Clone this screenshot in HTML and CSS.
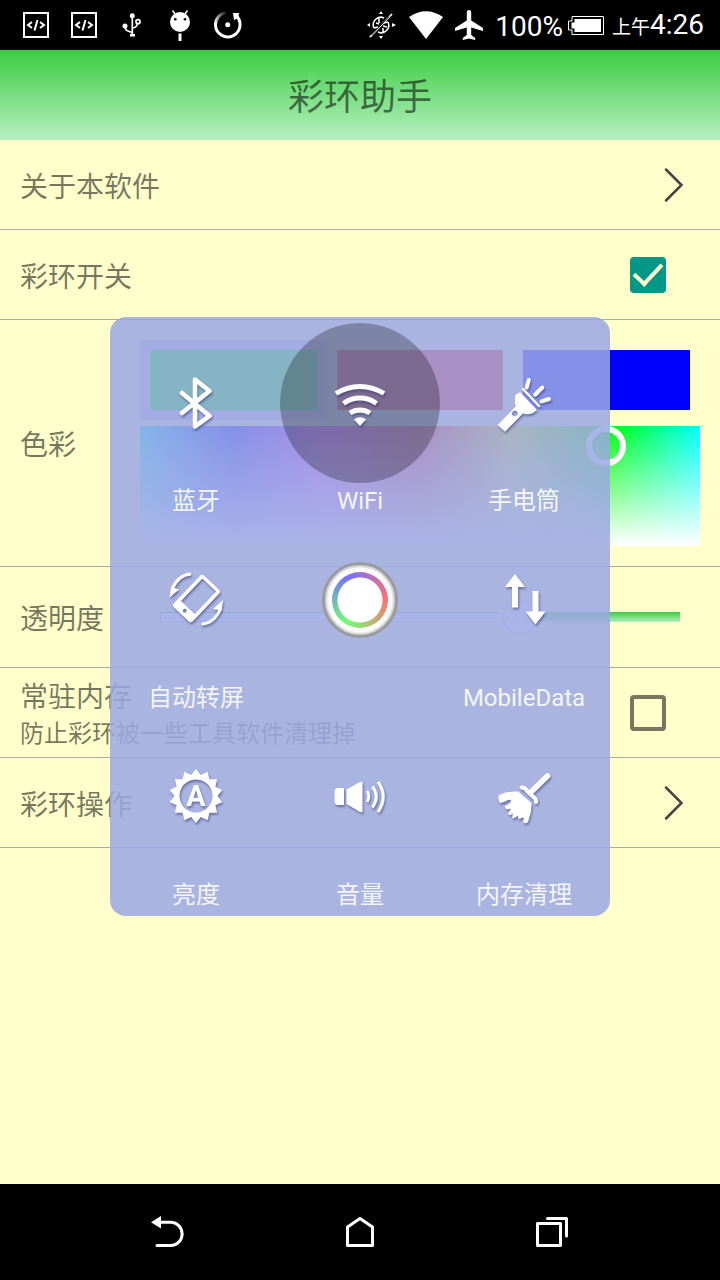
FILE: index.html
```html
<!DOCTYPE html>
<html lang="zh-CN">
<head>
<meta charset="utf-8">
<meta name="viewport" content="width=device-width, initial-scale=1">
<title>彩环助手</title>
<link rel="stylesheet" href="styles.css">
</head>
<body>
<div class="screen">
  <div class="status">
    <div class="status-left">
      <svg class="notice" viewBox="0 0 32 32"><rect x="4" y="4" width="24" height="24" fill="none" stroke="#fff" stroke-width="2"/><path d="M12 13l-4 3 4 3M20 13l4 3-4 3M17.500 11l-3 10.500" fill="none" stroke="#fff" stroke-width="2"/></svg>
      <svg class="notice" viewBox="0 0 32 32"><rect x="4" y="4" width="24" height="24" fill="none" stroke="#fff" stroke-width="2"/><path d="M12 13l-4 3 4 3M20 13l4 3-4 3M17.500 11l-3 10.500" fill="none" stroke="#fff" stroke-width="2"/></svg>
      <svg class="notice" viewBox="0 0 32 32"><g fill="none" stroke="#fff" stroke-width="1.700"><path d="M16.300 6v20M9 17q0 4 3 5l4 1.500M16.300 19q4.500-.5 5-4"/><circle cx="22" cy="12.700" r="2"/></g><g fill="#fff"><circle cx="16.300" cy="6.800" r="2.500"/><circle cx="9" cy="17" r="2.500"/><path d="M14 25h5v2.500h-5z"/></g></svg>
      <svg class="notice" viewBox="0 0 32 32"><circle cx="16" cy="13" r="10" fill="#fff"/><path d="M11 5L8.500 1.500M21 5l2.500-3.500" stroke="#fff" stroke-width="1.500"/><circle cx="11.300" cy="10.300" r="1.300"/><circle cx="21" cy="10.300" r="1.300"/><path d="M16 24.500v7.500" stroke="#fff" stroke-width="3"/></svg>
      <svg class="notice" viewBox="0 0 32 32"><defs><linearGradient id="fade" x1="0" y1="1" x2="1" y2="0"><stop offset="0" stop-color="#fff"/><stop offset="1" stop-color="#222"/></linearGradient></defs><path d="M23.500 6A12.300 12.300 0 1 1 3.500 16" fill="none" stroke="#fff" stroke-width="3"/><path d="M3.500 16A12.300 12.300 0 0 1 13.500 3.600" fill="none" stroke="url(#fade)" stroke-width="3"/><path d="M21 4h6.500l-1 1.500 1 5.500-2-1.500-3.500 1.500z" fill="#fff"/><circle cx="15.700" cy="15.700" r="2.500" fill="#fff"/></svg>
    </div>
    <div class="status-right">
      <svg class="mute" viewBox="0 0 32 32"><g fill="none" stroke="#fff" stroke-width="1.500"><path d="M5 28L27 5" stroke-width="1.800"/><path d="M6.500 26L24 7.500" stroke="#000" stroke-width="1"/><path d="M9 19a7.500 7.500 0 0 1 10-10M23 13a7.500 7.500 0 0 1-10 10M14 9v5M18 19v4M11 14l3 1M18 17l4 1M9 19l4-1M23 13l-4 1"/></g><path d="M14 5h4l-2-3zM14 27h4l-2 3zM5 14v4l-3-2zM27 14v4l4-2z" fill="#fff"/></svg>
      <svg class="signal" viewBox="0 0 34 28"><path d="M0 6Q17-5.500 34 6L17 28z" fill="#fff"/></svg>
      <svg class="plane" viewBox="0 0 28 30"><path d="M14 0q2.200 0 2.200 3v7.500L28 18v3l-11.800-3.500V25l4 3v2L14 28.500 7.800 30v-2l4-3v-7.500L0 21v-3l11.800-7.500V3q0-3 2.200-3z" fill="#fff"/></svg>
      <div class="power">
        <span class="percent">100%</span>
        <svg class="battery" viewBox="0 0 36 19"><path d="M4 .5h31.500v18H4v-4.500H.500V5H4z" fill="none" stroke="#fff"/><path d="M6.500 3H33v13H6.500v-3.500H3.500v-6h3z" fill="#fff"/></svg>
      </div>
      <time class="clock"><small>上午</small><span>4:26</span></time>
    </div>
  </div>

  <header class="title"><h1>彩环助手</h1></header>

  <main class="content">
    <a class="row" href="#about"><span class="name">关于本软件</span>
      <svg class="chevron" viewBox="0 0 20 36"><path d="M2 2.500L17.500 18 2 33.500" fill="none" stroke="#444" stroke-width="2.500" stroke-linecap="round"/></svg></a>
    <label class="row"><span class="name">彩环开关</span><input class="check" type="checkbox" checked></label>
    <section class="row row-color">
      <span class="name side">色彩</span>
      <div class="picker">
        <div class="swatches">
          <button class="swatch chosen" aria-label="绿"><span class="chip green"></span></button>
          <button class="swatch" aria-label="红"><span class="chip red"></span></button>
          <button class="swatch" aria-label="蓝"><span class="chip blue"></span></button>
        </div>
        <div class="spectrum"><span class="cursor"></span></div>
      </div>
    </section>
    <div class="row row-slider">
      <label class="name side" for="alpha">透明度</label>
      <div class="slide"><input id="alpha" class="range" type="range" min="0" max="255" value="180"></div>
    </div>
    <label class="row"><span class="stack"><span class="name">常驻内存</span><span class="hint">防止彩环被一些工具软件清理掉</span></span><input class="check" type="checkbox"></label>
    <a class="row" href="#usage"><span class="name">彩环操作</span>
      <svg class="chevron" viewBox="0 0 20 36"><path d="M2 2.500L17.500 18 2 33.500" fill="none" stroke="#444" stroke-width="2.500" stroke-linecap="round"/></svg></a>

    <div class="overlay">
      <div class="panel">
        <button class="tile"><span class="disc"><svg class="icon" viewBox="0 0 64 64"><path d="M18 22l27.500 23L31 55.500V8.500L45.500 20 18 42" fill="none" stroke="#fff" stroke-width="4.500" stroke-linecap="round" stroke-linejoin="round"/></svg></span><span class="caption">蓝牙</span></button>
        <button class="tile"><span class="disc pressed"><svg class="icon" viewBox="0 0 64 64"><g fill="none" stroke="#fff" stroke-width="5"><path d="M8 22.500A44 44 0 0 1 56 22.500"/><path d="M15.500 32.500A28 28 0 0 1 48.500 32.500"/><path d="M22 42A18 18 0 0 1 42 42"/></g><path d="M26 48.500q6-4.500 12 0L32 55z" fill="#fff"/></svg></span><span class="caption">WiFi</span></button>
        <button class="tile"><span class="disc"><svg class="icon" viewBox="0 0 64 64"><path fill="#fff" fill-rule="evenodd" d="M5.700 54l18-18.500Q22 29 23.500 24l4.500-3L45 39l-4.500 3.300Q35 44 31 42.300L13 60.700zM22.700 39.500a3 3 0 1 0 .01 0z"/><path d="M31 18L47 35" fill="none" stroke="#fff" stroke-width="2.500" stroke-linecap="round"/><path d="M36.700 9l-2 7.500M50.300 16.500l-7 7M57 28l-7.500 2.300" fill="none" stroke="#fff" stroke-width="4" stroke-linecap="round"/></svg></span><span class="caption">手电筒</span></button>

        <button class="tile"><span class="disc"><svg class="icon" viewBox="0 0 64 64"><g transform="rotate(43.500 32.500 30.500)"><path fill="#fff" fill-rule="evenodd" d="M22.500 8.500h20q3 0 3 3v38q0 3-3 3h-20q-3 0-3-3v-38q0-3 3-3zM23 12v31h19V12zM32.500 45.500a2 2 0 1 0 .01 0z"/></g><path d="M27 6Q15 6.500 8.500 20M37.500 56Q50 55.500 56.500 41" fill="none" stroke="#fff" stroke-width="3"/><path d="M7 19L5.500 29.500l9.500-8zM59 32l-10 9 8.500 1.500z" fill="#fff"/></svg></span><span class="caption">自动转屏</span></button>
        <button class="tile" aria-label="彩环"><span class="disc"><span class="knob"><span class="hue"></span></span></span></button>
        <button class="tile"><span class="disc"><svg class="icon" viewBox="0 0 64 64"><path fill="#fff" d="M23 6l10 13h-7v20.500h-6V19h-7zM43.500 56.500l-10-13h7V23h6v20.500h7z"/></svg></span><span class="caption">MobileData</span></button>

        <button class="tile"><span class="disc"><svg class="icon" viewBox="0 0 64 64"><path fill="#fff" fill-rule="evenodd" d="M32 4l4.800 6 6.900-3.300 1.700 7.500h7.700l-1.700 7.500 6.900 3.300-4.800 6 4.800 6-6.900 3.300 1.700 7.500h-7.700l-1.700 7.500-6.900-3.300-4.800 6-4.800-6-6.900 3.300-1.700-7.500h-7.700l1.700-7.500L5.700 37l4.800-6-4.800-6 6.900-3.300-1.700-7.500h7.700l1.700-7.500 6.900 3.300zM32 14.500a16.500 16.500 0 1 0 .01 0z"/><text class="auto" x="32" y="41" text-anchor="middle">A</text></svg></span><span class="caption">亮度</span></button>
        <button class="tile"><span class="disc"><svg class="icon" viewBox="0 0 64 64"><path fill="#fff" d="M9 23h7v17H9q-2.500-1-2.500-3V26q0-2 2.500-3zM18.500 24.500L32 17q2.500-1 2.500 1v28q0 2-2.500 1l-13.500-8z"/><path d="M39 26q3.500 5.500 0 11M44.500 21.500q7.500 10 0 21M50 17q10.500 14.500 0 30" fill="none" stroke="#fff" stroke-width="3"/></svg></span><span class="caption">音量</span></button>
        <button class="tile"><span class="disc"><svg class="icon" viewBox="0 0 64 64"><path d="M55.500 11L39 27" stroke="#fff" stroke-width="5.500" stroke-linecap="round"/><path d="M29.500 22.500q4 0 6 4l5 4.500q4 3 3.500 6" fill="none" stroke="#fff" stroke-width="4" stroke-linecap="round"/><path fill="#fff" d="M26.300 26.500Q15 26 7 30q-1.500 4 1 8 4-.5 8-3 2.500-1 3 1-1 3-6 5 0 3 2 3.500l4-1-3 5q1 2 3 1.500l2-2-1 4.500q2 1.500 4-.5l2-1.500v3q2.500 1 4-1l2 .5-1 4q3 2.500 5 0l3-10 .500-9z"/></svg></span><span class="caption">内存清理</span></button>
      </div>
    </div>
  </main>

  <nav class="keys">
    <button class="key" aria-label="返回"><svg viewBox="0 0 48 48"><path d="M7 14.300L17 8v12.500z" fill="#fff"/><path d="M16 14.300h11.500a11.700 11.700 0 0 1 0 23.300H13" fill="none" stroke="#fff" stroke-width="3" stroke-linecap="round"/></svg></button>
    <button class="key" aria-label="主页"><svg viewBox="0 0 48 48"><path d="M11.500 19L24 10.500 36.500 19v18.500h-25z" fill="none" stroke="#fff" stroke-width="3" stroke-linejoin="round"/></svg></button>
    <button class="key" aria-label="最近任务"><svg viewBox="0 0 48 48"><path d="M9.500 15.500h23v22h-23zM19.500 10.500h19v17.500" fill="none" stroke="#fff" stroke-width="3" stroke-linejoin="round" stroke-linecap="round"/></svg></button>
  </nav>
</div>
</body>
</html>
```
FILE: styles.css
```css
* { box-sizing: border-box; }

body {
  margin: 0;
  font-family: Roboto, "Noto Sans CJK SC", sans-serif;
  background: #ffffcc;
  color: rgba(0, 0, 0, 0.54);
}

button {
  margin: 0;
  padding: 0;
  border: 0;
  background: none;
  font: inherit;
  color: inherit;
}

svg { display: block; }

.screen {
  display: flex;
  flex-direction: column;
  min-height: 100vh;
}

/* status bar */
.status {
  display: flex;
  justify-content: space-between;
  height: 50px;
  padding: 0 16px 0 20px;
  background: #000;
  color: #fff;
  font-size: 28px;
  line-height: 32px;
}

.status-left,
.status-right,
.power {
  display: flex;
  align-items: center;
}

.status-left { gap: 16px; }
.status-right { gap: 12px; }
.power { gap: 5px; }
.percent { padding-top: 4px; }
.notice, .mute { width: 32px; height: 32px; }
.signal { width: 34px; height: 28px; }
.plane { width: 28px; height: 30px; }
.battery { width: 36px; height: 19px; }

.clock {
  display: flex;
  align-items: baseline;
  margin-left: -4px;
  padding-top: 2px;
}

.clock small { font-size: 19px; }

/* title bar */
.title {
  display: flex;
  align-items: center;
  justify-content: center;
  height: 90px;
  padding-top: 6px;
  background: linear-gradient(#3ccc41, #b7f0c2);
}

.title h1 {
  margin: 0;
  font-size: 36px;
  line-height: 48px;
  font-weight: 400;
}

/* settings list */
.content {
  position: relative;
  flex: 1;
}

.row {
  display: flex;
  align-items: center;
  justify-content: space-between;
  min-height: 90px;
  padding: 0 36px 0 20px;
  border-bottom: 1px solid #aaa;
  color: inherit;
  text-decoration: none;
}

.name {
  padding-top: 6px;
  font-size: 28px;
  line-height: 36px;
}

.side { flex: 0 0 120px; }

.stack {
  display: flex;
  flex-direction: column;
}

.hint {
  font-size: 24px;
  line-height: 36px;
}

.chevron { width: 20px; height: 36px; }

.check {
  appearance: none;
  width: 36px;
  height: 36px;
  margin: 0 18px 0 0;
  border: 4px solid #77775f;
  border-radius: 4px;
}

.check:checked {
  display: grid;
  place-items: center;
  border: 0;
  background: #009688;
}

.check:checked::after {
  content: "";
  width: 12px;
  height: 24px;
  margin-bottom: 8px;
  border: solid #ffffcc;
  border-width: 0 4px 4px 0;
  transform: rotate(43deg);
}

.row-color { padding: 20px; }

.picker {
  flex: 1;
  display: flex;
  flex-direction: column;
  gap: 6px;
}

.swatches { display: flex; }

.swatch {
  flex: 1;
  height: 80px;
  padding: 10px;
}

.chosen { background: #d0cbdd; }
.chip { display: block; height: 60px; }
.green { background: #00ff00; }
.red { background: #ff0000; }
.blue { background: #0000ff; }

.spectrum {
  position: relative;
  height: 120px;
  background:
    linear-gradient(rgba(255, 255, 255, 0), #fff),
    linear-gradient(90deg, #0ff, #00f, #f0f, #f00, #ff0, #0f0, #0ff);
}

.cursor {
  position: absolute;
  left: 83.3%;
  top: 20px;
  width: 40px;
  height: 40px;
  border: 6px solid #fff;
  border-radius: 50%;
  transform: translate(-50%, -50%);
}

.row-slider {
  min-height: 101px;
  padding-right: 20px;
}

.slide {
  flex: 1;
  padding: 0 20px;
}

.range {
  appearance: none;
  display: block;
  width: 100%;
  height: 36px;
  margin: 0;
  background:
    linear-gradient(#fff, #fff) 1px 50% / 65% 8px no-repeat,
    linear-gradient(#3ccc41, #b7f0c2) 0 50% / 65% 10px no-repeat,
    linear-gradient(#3ccc41, #b7f0c2) 100% 50% / 30% 10px no-repeat;
}

.range::-webkit-slider-thumb {
  appearance: none;
  width: 34px;
  height: 34px;
  border: 1px solid #bbb;
  border-radius: 50%;
  background: #fafaff;
}

/* floating quick panel, centred below the status bar */
.overlay {
  position: absolute;
  inset: -91px 0 0;
  display: grid;
  place-items: center;
}

.panel {
  display: grid;
  grid-template-columns: repeat(3, 1fr);
  width: 500px;
  padding: 6px 4px 2px;
  border-radius: 16px;
  background: rgba(155, 168, 228, 0.86);
  color: #f5f5f5;
}

.tile {
  display: flex;
  flex-direction: column;
  align-items: center;
  min-height: 197px;
  font-size: 24px;
  line-height: 36px;
}

.disc {
  display: grid;
  place-items: center;
  width: 160px;
  height: 160px;
  border-radius: 50%;
}

.pressed { background: rgba(0, 0, 0, 0.26); }

.icon {
  width: 64px;
  height: 64px;
  filter: drop-shadow(1px 2px 1px rgba(40, 50, 110, 0.5));
}

.auto {
  fill: #fff;
  font-family: "Liberation Sans Narrow", Roboto, sans-serif;
  font-size: 29px;
  font-weight: 700;
}

.knob {
  display: grid;
  place-items: center;
  width: 76px;
  height: 76px;
  border: 3px solid #999b9e;
  border-radius: 50%;
  background: #fff;
  box-shadow: inset 0 0 3px 1px #aaa;
}

.hue {
  width: 56px;
  height: 56px;
  border-radius: 50%;
  background:
    radial-gradient(circle, #fff 22px, transparent 23px),
    conic-gradient(from 90deg, #ff7272, #72ff72, #7272ff, #ff7272);
}

/* navigation keys */
.keys {
  display: flex;
  justify-content: center;
  height: 96px;
  background: #000;
}

.key {
  display: grid;
  place-items: center;
  width: 192px;
}

.key svg { width: 48px; height: 48px; }
```
